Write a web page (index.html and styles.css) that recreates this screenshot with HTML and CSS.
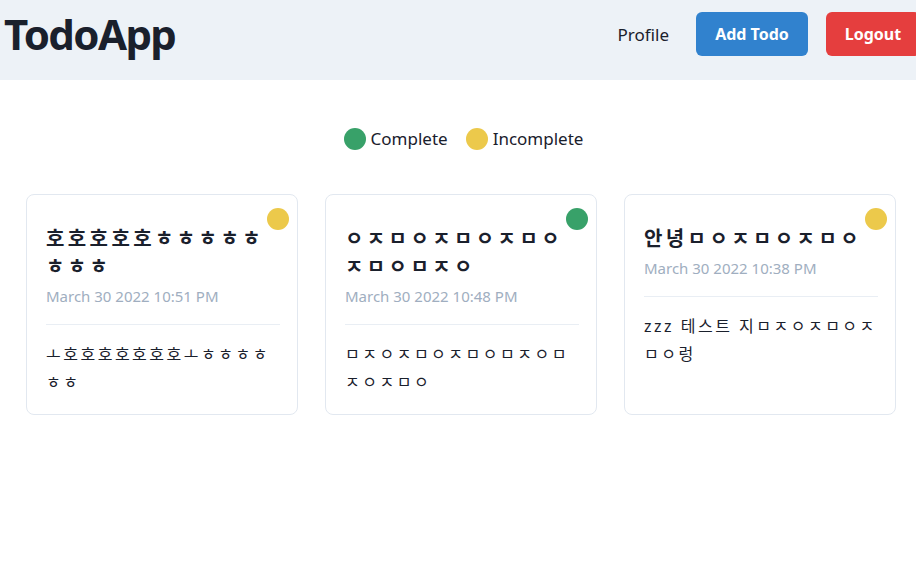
FILE: index.html
```html
<!DOCTYPE html>
<html lang="ko">
<head>
<meta charset="utf-8">
<title>TodoApp</title>
<link rel="stylesheet" href="styles.css">
</head>
<body>
<header class="topbar">
  <h1 class="brand">TodoApp</h1>
  <nav class="nav">
    <a class="nav-link" href="#">Profile</a>
    <a class="btn btn-blue" href="#">Add Todo</a>
    <a class="btn btn-red" href="#">Logout</a>
  </nav>
</header>
<main class="main">
  <div class="legend">
    <span class="legend-item"><span class="dot dot-green"></span>Complete</span>
    <span class="legend-item"><span class="dot dot-yellow"></span>Incomplete</span>
  </div>
  <section class="cards">
    <article class="card">
      <span class="dot dot-yellow card-dot"></span>
      <h2 class="card-title">호호호호호ㅎㅎㅎㅎㅎ<br>ㅎㅎㅎ</h2>
      <p class="card-date">March 30 2022 10:51 PM</p>
      <hr class="card-rule">
      <p class="card-body">ㅗ호호호호호호호ㅗㅎㅎㅎㅎ<br>ㅎㅎ</p>
    </article>
    <article class="card">
      <span class="dot dot-green card-dot"></span>
      <h2 class="card-title">ㅇㅈㅁㅇㅈㅁㅇㅈㅁㅇ<br>ㅈㅁㅇㅁㅈㅇ</h2>
      <p class="card-date">March 30 2022 10:48 PM</p>
      <hr class="card-rule">
      <p class="card-body">ㅁㅈㅇㅈㅁㅇㅈㅁㅇㅁㅈㅇㅁ<br>ㅈㅇㅈㅁㅇ</p>
    </article>
    <article class="card">
      <span class="dot dot-yellow card-dot"></span>
      <h2 class="card-title">안녕ㅁㅇㅈㅁㅇㅈㅁㅇ</h2>
      <p class="card-date">March 30 2022 10:38 PM</p>
      <hr class="card-rule">
      <p class="card-body">zzz 테스트 지ㅁㅈㅇㅈㅁㅇㅈ<br>ㅁㅇ렁</p>
    </article>
  </section>
</main>
</body>
</html>
```
FILE: styles.css
```css
* { box-sizing: border-box; }
html, body { margin: 0; padding: 0; overflow-x: hidden; }
body {
  font-family: "Noto Sans", "Noto Sans CJK KR", sans-serif;
  color: #1a202c;
  background: #ffffff;
}
.topbar {
  height: 80px;
  background: #edf2f7;
  display: flex;
  align-items: flex-start;
  justify-content: space-between;
  padding: 12px 0 0 4px;
  overflow: hidden;
}
.brand {
  margin: 1px 0 0;
  font-size: 42px;
  font-weight: 700;
  line-height: 1;
  letter-spacing: -1.6px;
}
.nav {
  display: flex;
  align-items: center;
  margin-right: -4px;
}
.nav-link {
  color: #1a202c;
  text-decoration: none;
  font-size: 17px;
  margin-right: 27px;
}
.btn {
  display: inline-flex;
  align-items: center;
  justify-content: center;
  height: 44px;
  border-radius: 6px;
  color: #ffffff;
  font-weight: 700;
  font-size: 16px;
  white-space: nowrap;
  text-decoration: none;
  padding: 0 10px;
}
.btn-blue { background: #3182ce; width: 112px; margin-right: 18px; }
.btn-red { background: #e53e3e; width: 94px; }
.main { padding: 47px 20px 0 26px; }
.legend {
  display: flex;
  justify-content: center;
  align-items: center;
  gap: 18px;
  font-size: 17px;
  margin-left: 5px;
}
.legend-item { display: inline-flex; align-items: center; gap: 5px; }
.dot {
  display: inline-block;
  width: 22px;
  height: 22px;
  border-radius: 50%;
}
.dot-green { background: #38a169; }
.dot-yellow { background: #ecc94b; }
.cards {
  display: grid;
  grid-template-columns: repeat(3, 272px);
  column-gap: 27px;
  margin-top: 44px;
}
.card {
  position: relative;
  border: 1px solid #e2e8f0;
  border-radius: 8px;
  padding: 30px 17px 18px 19px;
  min-height: 220px;
}
.card-dot { position: absolute; top: 13px; right: 8px; }
.card-title {
  margin: 0;
  font-size: 20px;
  line-height: 28px;
  font-weight: 700;
  letter-spacing: 3.4px;
  white-space: nowrap;
}
.card-date {
  margin: 4px 0 0;
  font-size: 15px;
  line-height: 22px;
  color: #a0aec0;
}
.card-rule {
  border: 0;
  border-top: 1px solid #e9eef4;
  margin: 17px 0 0;
}
.card-body {
  margin: 15px 0 0;
  font-size: 16px;
  line-height: 28px;
  letter-spacing: 2.5px;
  white-space: nowrap;
}
```
